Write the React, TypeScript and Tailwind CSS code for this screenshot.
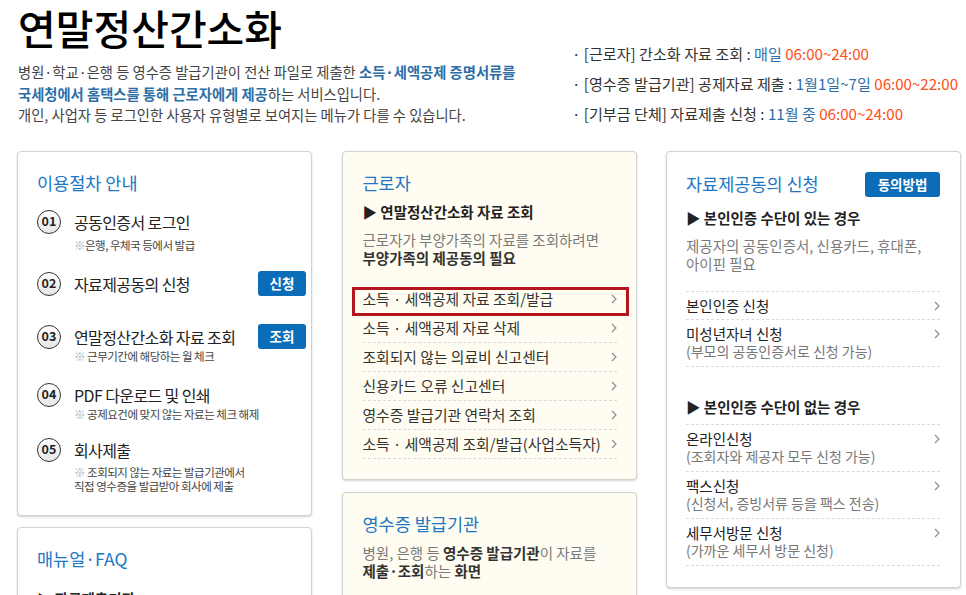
import React from 'react'

const Chevron = () => (
  <svg width="6" height="10" viewBox="0 0 6 10" className="shrink-0">
    <path d="M1 1l4 4-4 4" fill="none" stroke="#8a8a8a" strokeWidth="1.1" />
  </svg>
)

const steps = [
  { n: '01', title: '공동인증서 로그인', sub: ['※은행, 우체국 등에서 발급'], mt: 'mt-[14px]', subMt: 'mt-[4px]' },
  { n: '02', title: '자료제공동의 신청', btn: '신청', mt: 'mt-[19px]' },
  { n: '03', title: '연말정산간소화 자료 조회', btn: '조회', sub: ['※ 근무기간에 해당하는 월 체크'], mt: 'mt-[28px]', subMt: 'mt-0' },
  { n: '04', title: 'PDF 다운로드 및 인쇄', sub: ['※ 공제요건에 맞지 않는 자료는 체크 해제'], mt: 'mt-[19px]', subMt: 'mt-0' },
  { n: '05', title: '회사제출', sub: ['※ 조회되지 않는 자료는 발급기관에서', '직접 영수증을 발급받아 회사에 제출'], mt: 'mt-[16px]', subMt: 'mt-[3px]' }
]

const workerLinks = [
  '소득 · 세액공제 자료 조회/발급',
  '소득 · 세액공제 자료 삭제',
  '조회되지 않는 의료비 신고센터',
  '신용카드 오류 신고센터',
  '영수증 발급기관 연락처 조회',
  '소득 · 세액공제 조회/발급(사업소득자)'
]

const withAuth = [
  { title: '본인인증 신청' },
  { title: '미성년자녀 신청', sub: '(부모의 공동인증서로 신청 가능)' }
]

const withoutAuth = [
  { title: '온라인신청', sub: '(조회자와 제공자 모두 신청 가능)' },
  { title: '팩스신청', sub: '(신청서, 증빙서류 등을 팩스 전송)' },
  { title: '세무서방문 신청', sub: '(가까운 세무서 방문 신청)' }
]

const card = 'w-[295px] shrink-0 rounded-[4px] border border-[#d2d2d2] shadow-[0_1px_2px_rgba(0,0,0,0.18)]'

const ConsentRow = ({ title, sub }: { title: string; sub?: string }) => (
  <div className={`flex items-start justify-between border-b border-dashed border-[#dadada] pt-[5px] ${sub ? 'pb-[7px]' : 'pb-[4px]'}`}>
    <div>
      <div className="text-[14.5px] leading-[18px] text-[#222]">{title}</div>
      {sub && <div className="text-[14px] leading-[16px] text-[#777]">{sub}</div>}
    </div>
    <div className="mt-[4px]">
      <Chevron />
    </div>
  </div>
)

export default function App() {
  return (
    <div className="w-[966px] h-[595px] overflow-hidden bg-white font-['Noto_Sans_CJK_KR',sans-serif] text-[#333]">
      {/* Header */}
      <div className="flex h-[151px]">
        <div className="w-[572px] shrink-0 pl-[18px] pt-[1px]">
          <h1 className="text-[41px] leading-[52px] font-medium text-black">연말정산간소화</h1>
          <div className="mt-[8px] text-[14.3px] leading-[21.5px] text-[#444] whitespace-nowrap">
            <div>
              병원·학교·은행 등 영수증 발급기관이 전산 파일로 제출한{' '}
              <b className="text-[#2d6ea6]">소득·세액공제 증명서류를</b>
            </div>
            <div>
              <b className="text-[#2d6ea6]">국세청에서 홈택스를 통해 근로자에게 제공</b>하는 서비스입니다.
            </div>
            <div>개인, 사업자 등 로그인한 사용자 유형별로 보여지는 메뉴가 다를 수 있습니다.</div>
          </div>
        </div>
        <div className="pt-[38px] text-[15.1px] leading-[30px] text-[#333] whitespace-nowrap">
          <div>
            · [근로자] 간소화 자료 조회 : <span className="text-[#2d6ea6]">매일</span>{' '}
            <span className="text-[#ff4e17]">06:00~24:00</span>
          </div>
          <div>
            · [영수증 발급기관] 공제자료 제출 : <span className="text-[#2d6ea6]">1월1일~7일</span>{' '}
            <span className="text-[#ff4e17]">06:00~22:00</span>
          </div>
          <div>
            · [기부금 단체] 자료제출 신청 : <span className="text-[#2d6ea6]">11월 중</span>{' '}
            <span className="text-[#ff4e17]">06:00~24:00</span>
          </div>
        </div>
      </div>

      {/* Cards */}
      <div className="flex items-start gap-[29.5px] pl-[17px]">
        {/* Left column */}
        <div className="w-[295px] shrink-0">
          <div className={`${card} bg-white pl-[19px] pr-[5px] pt-[19px] pb-[22px]`}>
            <h2 className="text-[17.5px] leading-[24px] text-[#2277c4]">이용절차 안내</h2>
            {steps.map((s) => (
              <div key={s.n} className={s.mt}>
                <div className="flex items-center h-[25px]">
                  <div className="w-6 h-6 shrink-0 rounded-full border-[1.5px] border-[#333] bg-gradient-to-b from-white to-[#e6e6e6] flex items-center justify-center text-[12.5px] font-bold leading-none text-[#222]">
                    {s.n}
                  </div>
                  <div className="ml-[13px] text-[16px] leading-[24px] tracking-[-0.6px] text-[#222]">{s.title}</div>
                  {s.btn && (
                    <div className="ml-auto w-[48px] h-[25px] rounded-[3px] bg-[#0b6db7] text-white text-[13.5px] font-bold flex items-center justify-center">
                      {s.btn}
                    </div>
                  )}
                </div>
                {s.sub && (
                  <div className={`pl-[37px] ${s.subMt} text-[11.5px] leading-[14px] tracking-[-0.5px] text-[#444]`}>
                    {s.sub.map((line, i) => (
                      <div key={i}>
                        {line.startsWith('※') ? (
                          <>
                            <span className="text-[#9bb5b0]">※</span>
                            {line.slice(1)}
                          </>
                        ) : (
                          line
                        )}
                      </div>
                    ))}
                  </div>
                )}
              </div>
            ))}
          </div>
          <div className={`${card} mt-[11px] h-[120px] bg-white pl-[19px] pt-[19px]`}>
            <h2 className="text-[17.5px] leading-[24px] text-[#2277c4]">매뉴얼·FAQ</h2>
            <div className="mt-[18px] text-[14.5px] leading-[20px] font-bold text-[#222]">▶ 자료제출기관</div>
          </div>
        </div>

        {/* Middle column */}
        <div className="w-[295px] shrink-0">
          <div className={`${card} bg-[#fffdf1] pl-[20px] pr-[19px] pt-[19px] pb-[20px]`}>
            <h2 className="text-[17.5px] leading-[24px] text-[#2277c4]">근로자</h2>
            <div className="mt-[7px] text-[14.5px] leading-[20px] font-bold text-[#222]">▶ 연말정산간소화 자료 조회</div>
            <div className="mt-[9px] text-[14.5px] leading-[18px] text-[#7a7a7a]">
              근로자가 부양가족의 자료를 조회하려면
              <br />
              <b className="text-[#333]">부양가족의 제공동의 필요</b>
            </div>
            <div className="mt-[18px]">
              {workerLinks.map((t, i) => (
                <div
                  key={t}
                  className="relative flex h-[29px] items-center justify-between border-b border-dashed border-[#dadada] text-[14.8px] text-[#333]"
                >
                  <span>{t}</span>
                  <Chevron />
                  {i === 0 && (
                    <div className="absolute -left-[11px] -right-[12px] top-[2px] h-[29px] border-[3px] border-[#b3161c]" />
                  )}
                </div>
              ))}
            </div>
          </div>
          <div className={`${card} mt-[12px] h-[130px] bg-[#fffdf1] pl-[20px] pt-[19px]`}>
            <h2 className="text-[17.5px] leading-[24px] text-[#2277c4]">영수증 발급기관</h2>
            <div className="mt-[8px] text-[14.5px] leading-[18px] text-[#7a7a7a]">
              병원, 은행 등 <b className="text-[#333]">영수증 발급기관</b>이 자료를
              <br />
              <b className="text-[#333]">제출·조회</b>하는 <b className="text-[#333]">화면</b>
            </div>
          </div>
        </div>

        {/* Right column */}
        <div className={`${card} bg-white pl-[19px] pr-[20px] pt-[19px] pb-[21px]`}>
          <div className="flex h-[26px] items-center justify-between">
            <h2 className="text-[17.5px] leading-[24px] text-[#2277c4]">자료제공동의 신청</h2>
            <div className="w-[75px] h-[25px] rounded-[3px] bg-[#0b6db7] text-white text-[13.5px] font-bold flex items-center justify-center">
              동의방법
            </div>
          </div>
          <div className="mt-[11px] text-[14.5px] leading-[20px] font-bold text-[#222]">▶ 본인인증 수단이 있는 경우</div>
          <div className="mt-[9px] text-[14.5px] leading-[18px] text-[#7a7a7a]">
            제공자의 공동인증서, 신용카드, 휴대폰,
            <br />
            아이핀 필요
          </div>
          <div className="mt-[18px] border-t border-dashed border-[#dadada]">
            {withAuth.map((r) => (
              <ConsentRow key={r.title} {...r} />
            ))}
          </div>
          <div className="mt-[30px] text-[14.5px] leading-[20px] font-bold text-[#222]">▶ 본인인증 수단이 없는 경우</div>
          <div className="mt-[7px] border-t border-dashed border-[#dadada]">
            {withoutAuth.map((r) => (
              <ConsentRow key={r.title} {...r} />
            ))}
          </div>
        </div>
      </div>
    </div>
  )
}
